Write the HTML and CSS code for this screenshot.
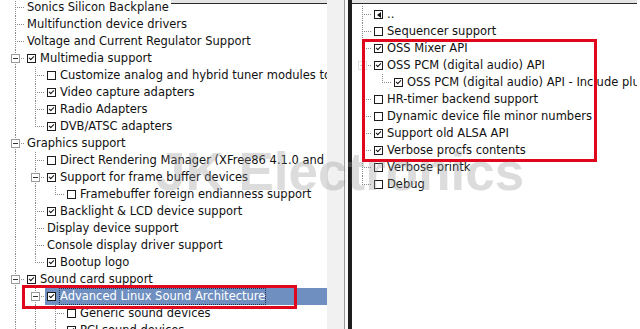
FILE: index.html
```html
<!DOCTYPE html>
<html lang="en">
	<head>
		<meta charset="utf-8" />
		<title>Kernel configuration - Sound</title>
		<link rel="stylesheet" href="styles.css">
	</head>
	<body>
		<div class="screen">
			<div class="pane pane-left">
				<div class="tree">
					<div class="row"><span class="ind tee"></span><span class="item"><span class="label">Sonics Silicon Backplane</span></span></div>
					<div class="row"><span class="ind tee"></span><span class="item"><span class="label">Multifunction device drivers</span></span></div>
					<div class="row"><span class="ind tee"></span><span class="item"><span class="label">Voltage and Current Regulator Support</span></span></div>
					<div class="row"><span class="ind tee"><span class="exp"></span></span><span class="item"><span class="cb on"></span><span class="label">Multimedia support</span></span></div>
					<div class="row"><span class="ind pipe"></span><span class="ind tee"></span><span class="item"><span class="cb"></span><span class="label">Customize analog and hybrid tuner modules to build</span></span></div>
					<div class="row"><span class="ind pipe"></span><span class="ind tee"></span><span class="item"><span class="cb on"></span><span class="label">Video capture adapters</span></span></div>
					<div class="row"><span class="ind pipe"></span><span class="ind tee"></span><span class="item"><span class="cb on"></span><span class="label">Radio Adapters</span></span></div>
					<div class="row"><span class="ind pipe"></span><span class="ind end"></span><span class="item"><span class="cb on"></span><span class="label">DVB/ATSC adapters</span></span></div>
					<div class="row"><span class="ind tee"><span class="exp"></span></span><span class="item"><span class="label">Graphics support</span></span></div>
					<div class="row"><span class="ind pipe"></span><span class="ind tee"></span><span class="item"><span class="cb"></span><span class="label">Direct Rendering Manager (XFree86 4.1.0 and higher DRI support)</span></span></div>
					<div class="row"><span class="ind pipe"></span><span class="ind tee"><span class="exp"></span></span><span class="item"><span class="cb on"></span><span class="label">Support for frame buffer devices</span></span></div>
					<div class="row"><span class="ind pipe"></span><span class="ind pipe"></span><span class="ind end"></span><span class="item"><span class="cb"></span><span class="label">Framebuffer foreign endianness support</span></span></div>
					<div class="row"><span class="ind pipe"></span><span class="ind tee"></span><span class="item"><span class="cb on"></span><span class="label">Backlight &amp; LCD device support</span></span></div>
					<div class="row"><span class="ind pipe"></span><span class="ind tee"></span><span class="item"><span class="label">Display device support</span></span></div>
					<div class="row"><span class="ind pipe"></span><span class="ind tee"></span><span class="item"><span class="label">Console display driver support</span></span></div>
					<div class="row"><span class="ind pipe"></span><span class="ind end"></span><span class="item"><span class="cb on"></span><span class="label">Bootup logo</span></span></div>
					<div class="row"><span class="ind tee"><span class="exp"></span></span><span class="item"><span class="cb on"></span><span class="label">Sound card support</span></span></div>
					<div class="row sel"><span class="ind pipe"></span><span class="ind tee"><span class="exp"></span></span><span class="item"><span class="cb on"></span><span class="label">Advanced Linux Sound Architecture</span></span></div>
					<div class="row"><span class="ind pipe"></span><span class="ind pipe"></span><span class="ind tee"></span><span class="item"><span class="cb"></span><span class="label">Generic sound devices</span></span></div>
					<div class="row"><span class="ind pipe"></span><span class="ind pipe"></span><span class="ind tee"></span><span class="item"><span class="cb on"></span><span class="label">PCI sound devices</span></span></div>
				</div>
			</div>
			<div class="gutter"></div>
			<div class="split"></div>
			<div class="pane pane-right">
				<div class="tree">
					<div class="row"><span class="ind tee"></span><span class="item"><span class="up"></span><span class="label">..</span></span></div>
					<div class="row"><span class="ind tee"></span><span class="item"><span class="cb"></span><span class="label">Sequencer support</span></span></div>
					<div class="row"><span class="ind tee"></span><span class="item"><span class="cb on"></span><span class="label">OSS Mixer API</span></span></div>
					<div class="row"><span class="ind tee"><span class="exp faint"></span></span><span class="item"><span class="cb on"></span><span class="label">OSS PCM (digital audio) API</span></span></div>
					<div class="row"><span class="ind pipe"></span><span class="ind end"></span><span class="item"><span class="cb on"></span><span class="label">OSS PCM (digital audio) API - Include plugin system</span></span></div>
					<div class="row"><span class="ind tee"></span><span class="item"><span class="cb"></span><span class="label">HR-timer backend support</span></span></div>
					<div class="row"><span class="ind tee"></span><span class="item"><span class="cb"></span><span class="label">Dynamic device file minor numbers</span></span></div>
					<div class="row"><span class="ind tee"></span><span class="item"><span class="cb on"></span><span class="label">Support old ALSA API</span></span></div>
					<div class="row"><span class="ind tee"></span><span class="item"><span class="cb on"></span><span class="label">Verbose procfs contents</span></span></div>
					<div class="row"><span class="ind tee"></span><span class="item"><span class="cb"></span><span class="label">Verbose printk</span></span></div>
					<div class="row"><span class="ind end"></span><span class="item"><span class="cb"></span><span class="label">Debug</span></span></div>
				</div>
			</div>

			<!-- annotations drawn over the screenshot -->
			<div class="callout callout-left"></div>
			<div class="callout callout-right"></div>
			<div class="watermark">JK Electronics</div>
		</div>
	</body>
</html>
```

FILE: styles.css
```css
body {
	margin: 0;
	background: #fff;
}
.screen {
	position: relative;
	display: flex;
	width: 640px;
	height: 329px;
	overflow: hidden;
	font-family: "DejaVu Sans", sans-serif;
	font-size: 11.5px;
	color: #111;
}
.pane {
	overflow: hidden;
	background: linear-gradient(#e4e4e4 0 3px, #2c2c2c 3px 4px, #fff 4px);
}
.pane-left {
	width: 327px;
	flex: none;
}
.pane-left .tree {
	margin-top: -1px;
}
.pane-left .row {
	padding-left: 5px;
}
/* the half-hidden first row paints over the frame edge */
.pane-left .row:first-child {
	width: max-content;
	padding-right: 2px;
	background: #fff;
}
.pane-right {
	flex: 1;
	margin-right: 3px;
}
.pane-right .tree {
	margin-top: 6px;
}
.gutter {
	width: 17px;
	flex: none;
	background: #f1f1f1;
}
.split {
	width: 8px;
	flex: none;
	box-sizing: border-box;
	border-left: 1px solid #9c9c9c;
	border-right: 4px solid #1e1e1e;
	background: #fafafa;
}

/* tree rows */
.row {
	display: flex;
	height: 17px;
	line-height: 17px;
	white-space: nowrap;
}
.ind {
	flex: none;
	width: 20px;
	height: 17px;
	display: flex;
	align-items: center;
	background-repeat: no-repeat;
}
.pipe {
	background-image: repeating-linear-gradient(to bottom, #8a8a8a 0 1px, transparent 1px 2px);
	background-size: 1px 17px;
	background-position: 10px 0;
}
.tee,
.end {
	background-image: repeating-linear-gradient(to bottom, #8a8a8a 0 1px, transparent 1px 2px),
		repeating-linear-gradient(to right, #8a8a8a 0 1px, transparent 1px 2px);
	background-size: 1px 17px, 10px 1px;
	background-position: 10px 0, 10px 8px;
}
.end {
	background-size: 1px 9px, 10px 1px;
}
.exp {
	width: 9px;
	height: 9px;
	margin-left: 6px;
	box-sizing: border-box;
	border: 1px solid #9a9a9a;
	background: #fff linear-gradient(#333, #333) center / 5px 1px no-repeat;
}
.exp.faint {
	border-color: #e2e2e2;
	background: #fff linear-gradient(#cfcfcf, #cfcfcf) center / 5px 1px no-repeat;
}
.item {
	flex: 1;
	display: flex;
	align-items: center;
	height: 17px;
	padding-left: 2px;
}
.cb,
.up {
	flex: none;
	width: 9px;
	height: 9px;
	box-sizing: border-box;
	border: 1px solid #1c1c1c;
	background: #fff;
	display: flex;
	align-items: center;
	justify-content: center;
}
.cb.on::after {
	content: "";
	width: 2px;
	height: 4px;
	border: solid #111;
	border-width: 0 1.5px 1.5px 0;
	transform: translateY(-1px) rotate(45deg);
}
.up::after {
	content: "";
	border-style: solid;
	border-width: 3px 4px 3px 0;
	border-color: transparent #111 transparent transparent;
}
.cb + .label,
.up + .label {
	margin-left: 4px;
}
.sel .item {
	background: #6f8fc0;
	color: #fff;
}
.sel .label {
	outline: 1px dotted #203050;
	outline-offset: -1px;
	padding: 0 1px;
	margin-left: 3px;
}

/* red callouts and watermark */
.callout {
	position: absolute;
	border: 3px solid #e0061b;
	box-sizing: border-box;
}
.callout-left {
	left: 22px;
	top: 285px;
	width: 275px;
	height: 24px;
}
.callout-right {
	left: 362px;
	top: 39px;
	width: 235px;
	height: 123px;
}
.watermark {
	position: absolute;
	left: 156px;
	top: 145px;
	font: bold 53px/1 "Liberation Sans", Arial, sans-serif;
	color: rgba(150, 150, 150, 0.33);
	white-space: nowrap;
}
```
